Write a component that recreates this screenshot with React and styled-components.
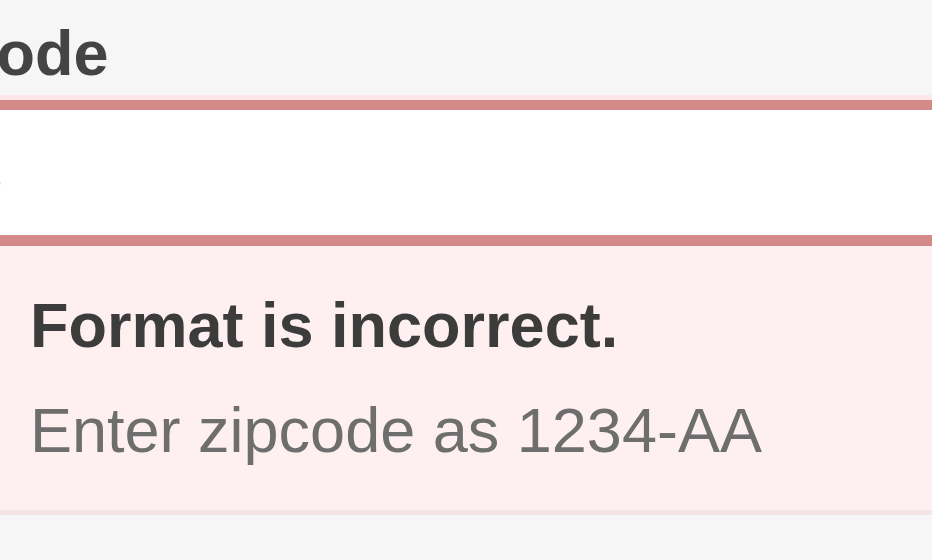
import React from 'react';
import styled, { createGlobalStyle } from 'styled-components';

const GlobalStyle = createGlobalStyle`
    html, body {
        margin: 0;
        padding: 0;
        background-color: #f6f6f6;
        overflow: hidden;
    }

    body {
        font-family: "Liberation Sans", Arial, sans-serif;
    }
`;

export default function App() {
    return (
        <>
            <GlobalStyle />
            <Page>
                <Field>
                    <Label htmlFor="zipcode">Zipcode</Label>
                    <Input id="zipcode" value="123" readOnly />
                    <ErrorBox>
                        <ErrorTitle>Format is incorrect.</ErrorTitle>
                        <ErrorText>Enter zipcode as 1234-AA</ErrorText>
                    </ErrorBox>
                </Field>
            </Page>
        </>
    );
}

const Page = styled.div`
    width: 932px;
    height: 560px;
    overflow: hidden;
    background-color: #f6f6f6;
`;

const Field = styled.div`
    display: flex;
    flex-direction: column;
    margin: 0 -60px 0 -140px;
`;

const Label = styled.label`
    display: block;
    margin: 22px 0 15px 7px;

    color: #444;
    font-size: 63px;
    font-weight: bold;
    line-height: 63px;
`;

const Input = styled.input`
    box-sizing: border-box;
    width: 100%;
    height: 146px;
    margin: 0;
    padding: 0 28px;

    border: 10px solid #d48a89;
    border-bottom-width: 11px;
    box-shadow: 0 0 0 5px #fde7e7;
    outline: none;
    background-color: #fff;

    color: #888;
    font-family: "Liberation Sans", Arial, sans-serif;
    font-size: 63px;
`;

const ErrorBox = styled.div`
    padding: 27px 170px;

    background-color: #fef0f0;
    border-bottom: 5px solid #f3e5e5;
`;

const ErrorTitle = styled.div`
    color: #3c3c3c;
    font-size: 63px;
    font-weight: bold;
    line-height: 105px;
`;

const ErrorText = styled.div`
    color: #6e6e6e;
    font-size: 63px;
    line-height: 105px;
`;
